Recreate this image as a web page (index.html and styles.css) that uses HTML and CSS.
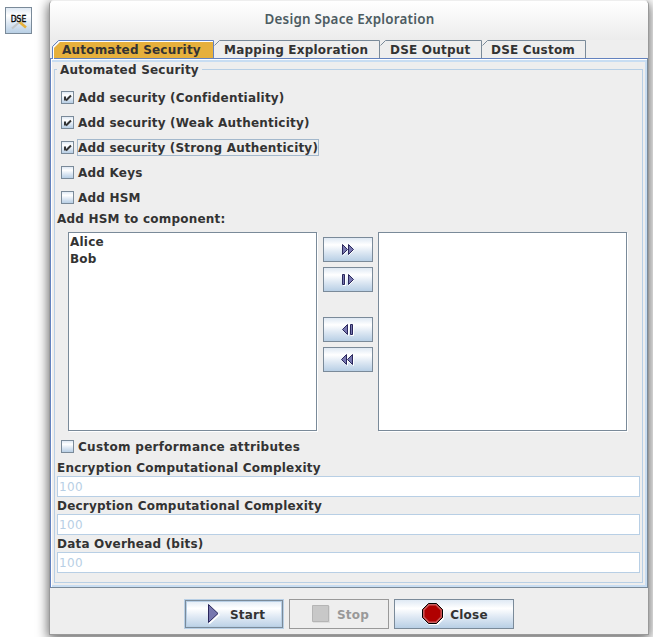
FILE: index.html
```html
<!DOCTYPE html>
<html lang="en">
<head>
<meta charset="utf-8">
<title>Design Space Exploration</title>
<link rel="stylesheet" href="styles.css">
</head>
<body>
<div class="desktop">
  <aside class="toolbar">
    <button class="tool" aria-label="Design space exploration">
      <svg width="25" height="25" viewBox="0 0 25 25">
        <path d="M6 20.500L17 11" stroke="#c3c6c9" stroke-width="2.2"/>
        <path d="M15 9l1 3 4 0" stroke="#d8dadd" stroke-width="2" fill="none"/>
        <path d="M13.500 14l6.500 5.500" stroke="#e6b13c" stroke-width="2.6"/>
        <path d="M8 10l4 3" stroke="#999" stroke-width="1.5"/>
        <text x="4.700" y="14.200" textLength="15.600" lengthAdjust="spacingAndGlyphs">DSE</text>
      </svg>
    </button>
  </aside>
  <main class="window">
    <header class="title"><span>Design Space Exploration</span></header>
    <nav class="tabs">
      <div class="tab t1"><svg width="162" height="19"><path class="hl" d="M1.500 19V7.500L7.500 1.500H161"/><path class="sel" d="M2 18V8L8 2H161V18z"/><path class="blue" d="M.5 18.500V6.500L6.500.5H161.500V18.500"/></svg><span>Automated Security</span></div>
      <div class="tab t2"><svg width="166" height="19"><path class="gray" d="M.5 5.500L5.500.5H165.500V18"/></svg><span>Mapping Exploration</span></div>
      <div class="tab t3"><svg width="102" height="19"><path class="gray" d="M.5 5.500L5.500.5H101.500V18"/></svg><span>DSE Output</span></div>
      <div class="tab t4"><svg width="104" height="19"><path class="gray" d="M.5 5.500L5.500.5H103.500V18"/></svg><span>DSE Custom</span></div>
    </nav>
    <section class="pane">
      <div class="group">
        <div class="legend"><span>Automated Security</span></div>
        <div class="checks">
          <label><i class="box"><svg width="11" height="11"><path d="M3 4.500V8.500M4 8.500L9 3.500" /></svg></i><span>Add security (Confidentiality)</span></label>
          <label><i class="box"><svg width="11" height="11"><path d="M3 4.500V8.500M4 8.500L9 3.500" /></svg></i><span>Add security (Weak Authenticity)</span></label>
          <label class="focus"><i class="box"><svg width="11" height="11"><path d="M3 4.500V8.500M4 8.500L9 3.500" /></svg></i><span>Add security (Strong Authenticity)</span></label>
          <label><i class="box"></i><span>Add Keys</span></label>
          <label><i class="box"></i><span>Add HSM</span></label>
        </div>
        <div class="caption"><span>Add HSM to component:</span></div>
        <div class="transfer">
          <div class="list"><div><span>Alice</span></div><div><span>Bob</span></div></div>
          <div class="movers">
            <button aria-label="Add all"><svg width="14" height="13"><path class="sh" d="M2 12.500L7 7.500M7.500 12.500L13.500 6.500"/><path class="ar" d="M1.500 1.500v10L6.500 6.500zM7.500 1.500v10L12.500 6.500z"/></svg></button>
            <button aria-label="Add selected"><svg width="14" height="13"><path class="sh" d="M2 12.500h2.500V2M7.500 12.500L13 7"/><path class="ar" d="M1.500 1.500h2v10h-2zM7.500 1.500v10L12.500 6.500z"/></svg></button>
            <button class="gap" aria-label="Remove selected"><svg width="14" height="13"><path class="sh" d="M2 7.500l5.500 5V2M9.500 12.500h3V2"/><path class="ar" d="M6.500 1.500v10L1.500 6.500zM9.500 1.500h2v10h-2z"/></svg></button>
            <button aria-label="Remove all"><svg width="14" height="13"><path class="sh" d="M1 7.500l5.500 5V8l6 4.500V2"/><path class="ar" d="M5.500 1.500v10L.5 6.500zM11.500 1.500v10L6.500 6.500z"/></svg></button>
          </div>
          <div class="list"></div>
        </div>
        <div class="checks custom"><label><i class="box"></i><span>Custom performance attributes</span></label></div>
        <div class="caption"><span>Encryption Computational Complexity</span></div>
        <div class="field">100</div>
        <div class="caption"><span>Decryption Computational Complexity</span></div>
        <div class="field">100</div>
        <div class="caption"><span>Data Overhead (bits)</span></div>
        <div class="field">100</div>
      </div>
    </section>
    <footer class="actions">
      <button class="start"><svg width="13" height="22"><path d="M2 20.500L12.500 11" stroke="#fff" stroke-width="2"/><path class="ar" d="M1.500 1.500v18L11 10.500z"/></svg><span>Start</span></button>
      <button class="stop"><svg width="18" height="18"><path fill="#dedede" d="M1 1h17v17H1z"/><path fill="#c8c8c8" stroke="#b5b5b5" d="M.5.5h16v16H.5z"/></svg><span>Stop</span></button>
      <button class="close"><svg width="22" height="22"><path fill="#fff" d="M7 1h9l6 6v9l-6 6H7l-6-6z"/><path fill="#b00000" stroke="#000" d="M6.500.5h8l6 6v8l-6 6h-8l-6-6v-8z"/><path fill="none" stroke="#c86060" stroke-width="1.400" d="M7 1.800h7l5.200 5.200v7L14 19.200H7L1.800 14V7z"/></svg><span>Close</span></button>
    </footer>
  </main>
</div>
</body>
</html>
```

FILE: styles.css
```css
* { box-sizing: border-box; }
body {
  margin: 0;
  background: #fff;
  color: #333;
  font: bold 12px/17px "DejaVu Sans", sans-serif;
  letter-spacing: .21px;
  overflow: hidden;
}
svg { display: block; flex: none; }
span { white-space: nowrap; }
button {
  display: flex;
  align-items: center;
  justify-content: center;
  margin: 0;
  padding: 0;
  color: inherit;
  font: inherit;
  letter-spacing: inherit;
  border: 1px solid #7a8a99;
  background: linear-gradient(#dfe9f4 0, #fff 30%, #dfe9f4 60%, #b8cfe5 100%);
}
.desktop { display: flex; width: 653px; height: 637px; }
.toolbar { width: 49px; padding: 7px 0 0 5px; }
.tool { width: 27px; height: 27px; }
.tool text { font: 9px "DejaVu Sans", sans-serif; letter-spacing: 0; fill: #000; stroke: #000; stroke-width: .3px; }
.window {
  width: 600px;
  height: 635px;
  border: 1px solid #999;
  border-top-color: #eee;
  border-radius: 5px 5px 0 0;
  background: #eee;
  box-shadow: 0 3px 12px 1px rgba(0, 0, 0, .6);
}
.title {
  height: 39px;
  padding: 0 0 3px 1px;
  display: flex;
  align-items: center;
  justify-content: center;
  border-radius: 4px 4px 0 0;
  background: linear-gradient(#fff, #ececec);
  color: #4d5c62;
  font: 600 13.4px/18px "Noto Sans", sans-serif;
}
.tabs { display: flex; height: 18px; padding-left: 2px; }
.tab { height: 19px; display: grid; }
.tab > * { grid-area: 1 / 1; }
.tab span { padding-left: 10px; line-height: 20px; z-index: 1; }
.tab.t4 span { padding-left: 9px; }
.tab path { fill: none; }
.tab .sel { fill: #e6b03c; }
.tab .hl { stroke: #fff; }
.tab .blue { stroke: #6382bf; }
.tab .gray { stroke: #7a8a99; }
.t1 { z-index: 1; }
.pane {
  height: 530px;
  border: 1px solid #6382bf;
  border-right-color: #7a8a99;
  border-bottom-color: #7a8a99;
  box-shadow: inset 1px 1px #fff, inset -2px -2px #c8ddf2, inset 0 3px #c8ddf2;
  padding: 10px 4px 4px 3px;
}
.group {
  height: 514px;
  border: 1px solid #b8cfe5;
  padding: 0 2px;
}
.legend { height: 16px; margin-top: -8px; }
.legend span { display: inline-block; padding: 0 3px; background: #eee; }
.checks { padding: 7px 4px 0; }
.checks label { display: flex; align-items: center; height: 25px; }
.box {
  width: 13px;
  height: 13px;
  margin-right: 3px;
  border: 1px solid #7a8a99;
  background: linear-gradient(#dfe9f4 0, #fff 30%, #dfe9f4 60%, #b8cfe5 100%);
}
.box path { fill: none; stroke: #333; stroke-width: 2; }
.checks span { border: 1px solid transparent; height: 17px; line-height: 17px; }
.focus span { border-color: #a3b8cc; letter-spacing: .19px; }
.caption { height: 17px; padding-top: 1px; }
.transfer { display: flex; justify-content: space-between; height: 199px; margin: 5px 13px 0 11px; }
.list {
  width: 249px;
  border: 1px solid #7a8a99;
  box-shadow: 1px 1px #fff;
  background: #fff;
  padding: 1px 1px 0;
}
.movers { width: 50px; padding-top: 5px; display: flex; flex-direction: column; gap: 5px; }
.movers button { height: 25px; }
.movers .gap { margin-top: 20px; }
.ar { fill: #7777af; stroke: #29265c; }
.sh { fill: none; stroke: #fff; }
.checks.custom { padding-top: 3px; height: 28px; letter-spacing: .3px; }
.field {
  height: 21px;
  border: 1px solid #b8cfe5;
  background: #fff;
  color: #b8cfe5;
  padding-left: 1px;
  font-weight: normal;
  letter-spacing: .37px;
  line-height: 21px;
}
.actions { display: flex; gap: 5px; padding: 11px 0 0 134px; }
.actions button { height: 30px; }
.actions .start { width: 100px; padding-left: 4px; border-color: #b8cfe5; box-shadow: inset 0 0 0 1px #7a8a99, inset 0 0 0 2px #b8cfe5; }
.actions .stop { width: 100px; padding-left: 3px; background: #eee; border-color: #999; color: #999; }
.actions .close { width: 120px; padding-left: 2px; }
.actions span { margin-left: 7px; padding-top: 2px; }
.actions .start span { margin-left: 10px; }
.actions .close span { margin-left: 6px; }
```
